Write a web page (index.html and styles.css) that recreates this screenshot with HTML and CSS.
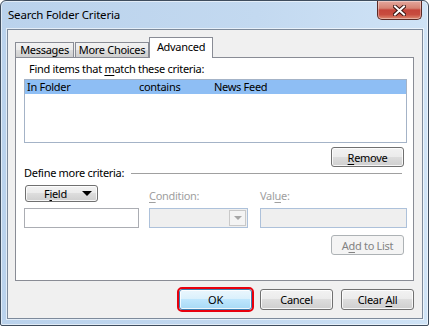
FILE: index.html
```html
<!DOCTYPE html>
<html lang="en">
<head>
    <meta charset="UTF-8">
    <meta name="viewport" content="width=device-width, initial-scale=1.0">
    <title>Search Folder Criteria</title>
    <link rel="stylesheet" href="styles.css">
</head>
<body>
    <div class="window">
        <div class="titlebar">
            <span class="title">Search Folder Criteria</span>
            <button class="close" type="button" aria-label="Close">
                <svg width="13" height="11" viewBox="0 0 13 11">
                    <path d="M2 1.5 L11 9.5 M11 1.5 L2 9.5" stroke="#3b1512" stroke-width="4" stroke-linecap="square"/>
                    <path d="M2 1.5 L11 9.5 M11 1.5 L2 9.5" stroke="#ffffff" stroke-width="2" stroke-linecap="square"/>
                </svg>
            </button>
        </div>

        <div class="client">
            <div class="tabs">
                <div class="tab tab-messages">Messages</div>
                <div class="tab tab-more">More Choices</div>
                <div class="tab tab-advanced active">Advanced</div>
            </div>

            <div class="panel">
                <div class="find-label">Find items that <u>m</u>atch these criteria:</div>

                <div class="listbox">
                    <div class="list-row selected">
                        <span class="cell cell-field">In Folder</span>
                        <span class="cell cell-cond">contains</span>
                        <span class="cell">News Feed</span>
                    </div>
                </div>

                <div class="button-row">
                    <button class="btn" type="button"><u>R</u>emove</button>
                </div>

                <div class="group-label">
                    <span>Define more criteria:</span>
                </div>

                <div class="criteria">
                    <div class="col col-field">
                        <button class="field-btn" type="button">
                            <span>F<u>i</u>eld</span>
                            <span class="down-arrow"></span>
                        </button>
                        <div class="textbox"></div>
                    </div>
                    <div class="col col-cond">
                        <label class="dim-label"><u>C</u>ondition:</label>
                        <div class="combo disabled">
                            <span class="combo-text"></span>
                            <span class="combo-arrow"></span>
                        </div>
                    </div>
                    <div class="col col-value">
                        <label class="dim-label">Val<u>u</u>e:</label>
                        <div class="textbox disabled"></div>
                    </div>
                </div>

                <div class="button-row add-row">
                    <button class="btn" type="button" disabled>A<u>d</u>d to List</button>
                </div>
            </div>

            <div class="footer">
                <button class="btn default" type="button">OK</button>
                <button class="btn" type="button">Cancel</button>
                <button class="btn" type="button">Clear <u>A</u>ll</button>
            </div>
        </div>
    </div>
</body>
</html>
```

FILE: styles.css
```css
:root {
  --frame-border: #3f4d5e;
  --client-bg: #f0f0f0;
  --tab-border: #898c95;
  --btn-border: #707070;
  --disabled-text: #a0a0a0;
  --select-bg: #8ebef4;
}

* {
  box-sizing: border-box;
}

body {
  margin: 0;
  font-family: "Noto Sans", "Open Sans", sans-serif;
  font-size: 11px;
  letter-spacing: -0.3px;
  color: #000;
  background: #ffffff;
}

button {
  letter-spacing: inherit;
}

u {
  text-decoration-thickness: 1px;
  text-underline-offset: 2px;
}

/* window frame */
.window {
  width: 429px;
  height: 326px;
  border: 1px solid var(--frame-border);
  border-radius: 6px 6px 2px 2px;
  background: linear-gradient(90deg, #bad2ec 0%, #c3d9f0 60%, #cfe3f6 100%);
  box-shadow: inset 0 0 0 1px rgba(255, 255, 255, 0.55);
  display: flex;
  flex-direction: column;
}

.titlebar {
  height: 28px;
  display: flex;
  align-items: flex-start;
  padding-left: 7px;
}

.title {
  line-height: 28px;
  font-size: 11.5px;
  letter-spacing: -0.2px;
  color: #000;
}

.close {
  margin-left: auto;
  margin-right: 6px;
  width: 45px;
  height: 19px;
  padding: 0;
  border: 1px solid #5b2a25;
  border-top: none;
  border-radius: 0 0 5px 5px;
  background: linear-gradient(180deg, #e4a79d 0%, #d68373 40%, #c5453a 50%, #c84c3f 75%, #dd8a72 100%);
  box-shadow: inset 0 0 0 1px rgba(255, 255, 255, 0.35);
  display: flex;
  align-items: center;
  justify-content: center;
}

.client {
  margin: 0 5px 6px 6px;
  height: 290px;
  border: 1px solid #7d8a9b;
  background: var(--client-bg);
  box-shadow: 0 0 0 1px rgba(255, 255, 255, 0.6);
}

/* tabs */
.tabs {
  display: flex;
  align-items: flex-end;
  height: 27px;
  padding: 7px 0 0 7px;
}

.tab {
  height: 15px;
  line-height: 14px;
  text-align: center;
  white-space: nowrap;
  border: 1px solid var(--tab-border);
  border-bottom: none;
  background: linear-gradient(180deg, #f2f2f2 0%, #ebebeb 50%, #dddddd 50%, #cfcfcf 100%);
  position: relative;
}

.tab-messages {
  width: 59px;
}

.tab-more {
  width: 74px;
  margin-left: 1px;
}

.tab-advanced {
  width: 64px;
}

.tab.active {
  height: 21px;
  line-height: 17px;
  margin-bottom: -1px;
  background: #ffffff;
  z-index: 1;
}

/* tab page */
.panel {
  margin-left: 7px;
  width: 399px;
  height: 224px;
  border: 1px solid var(--tab-border);
  background: #ffffff;
}

.find-label {
  line-height: 15px;
  padding: 3px 0 0 13px;
}

.listbox {
  margin: 3px 0 0 8px;
  width: 383px;
  height: 64px;
  border: 1px solid #a4b3c7;
  background: #ffffff;
}

.list-row {
  display: flex;
  height: 14px;
  line-height: 14px;
}

.list-row.selected {
  background: var(--select-bg);
}

.cell-field {
  width: 114px;
  padding-left: 2px;
}

.cell-cond {
  width: 75px;
}

.button-row {
  display: flex;
  padding-left: 315px;
  margin-top: 4px;
}

.add-row {
  margin-top: 7px;
}

/* buttons */
.btn {
  width: 73px;
  height: 20px;
  padding: 0;
  font: inherit;
  color: #000;
  border: 1px solid var(--btn-border);
  border-radius: 3px;
  background: linear-gradient(180deg, #f2f2f2 0%, #ebebeb 50%, #dddddd 50%, #cfcfcf 100%);
  box-shadow: inset 0 0 0 1px rgba(255, 255, 255, 0.8);
}

.btn:disabled {
  color: #838383;
  border-color: #adb2b5;
  background: #f4f4f4;
  box-shadow: none;
}

.btn.default {
  border-color: #3c7fb1;
  background: linear-gradient(180deg, #eaf6fd 0%, #d9f0fc 50%, #bee6fd 50%, #a7d9f5 100%);
  outline: 2px solid #e8000d;
}

.footer .btn {
  height: 21px;
}

/* define more criteria */
.group-label {
  display: flex;
  align-items: center;
  height: 12px;
  line-height: 12px;
  padding: 0 11px 0 8px;
}

.group-label::after {
  content: "";
  flex: 1;
  margin-left: 7px;
  border-top: 1px solid #a0a0a0;
}

.criteria {
  display: flex;
  margin: 6px 0 0 8px;
}

.col {
  display: flex;
  flex-direction: column;
  justify-content: flex-end;
  gap: 6px;
}

.col-field {
  width: 115px;
}

.col-cond {
  width: 99px;
  margin-left: 10px;
}

.col-value {
  width: 147px;
  margin-left: 12px;
}

.field-btn {
  margin-left: 1px;
  width: 73px;
  height: 17px;
  padding: 0 5px 0 18px;
  font: inherit;
  color: #000;
  line-height: 14px;
  display: flex;
  align-items: center;
  justify-content: space-between;
  border: 1px solid var(--btn-border);
  border-radius: 3px;
  background: linear-gradient(180deg, #f2f2f2 0%, #ebebeb 50%, #dddddd 50%, #cfcfcf 100%);
  box-shadow: inset 0 0 0 1px rgba(255, 255, 255, 0.8);
}

.down-arrow {
  width: 0;
  height: 0;
  border-left: 5px solid transparent;
  border-right: 5px solid transparent;
  border-top: 5px solid #000;
}

.dim-label {
  color: var(--disabled-text);
  line-height: 12px;
}

.textbox {
  height: 20px;
  border: 1px solid #abadb3;
  background: #ffffff;
}

.textbox.disabled {
  border-color: #adc1da;
  background: #efefef;
}

.combo {
  height: 20px;
  display: flex;
  border: 1px solid #adc1da;
  background: #efefef;
}

.combo-text {
  flex: 1;
}

.combo-arrow {
  width: 17px;
  margin: 1px;
  border: 1px solid #c9c9c9;
  background: #f4f4f4;
  display: flex;
  align-items: center;
  justify-content: center;
}

.combo-arrow::before {
  content: "";
  border-left: 4px solid transparent;
  border-right: 4px solid transparent;
  border-top: 4px solid #a6a6a6;
}

/* dialog buttons */
.footer {
  display: flex;
  justify-content: flex-end;
  gap: 8px;
  padding: 8px 8px 0 0;
}
```
